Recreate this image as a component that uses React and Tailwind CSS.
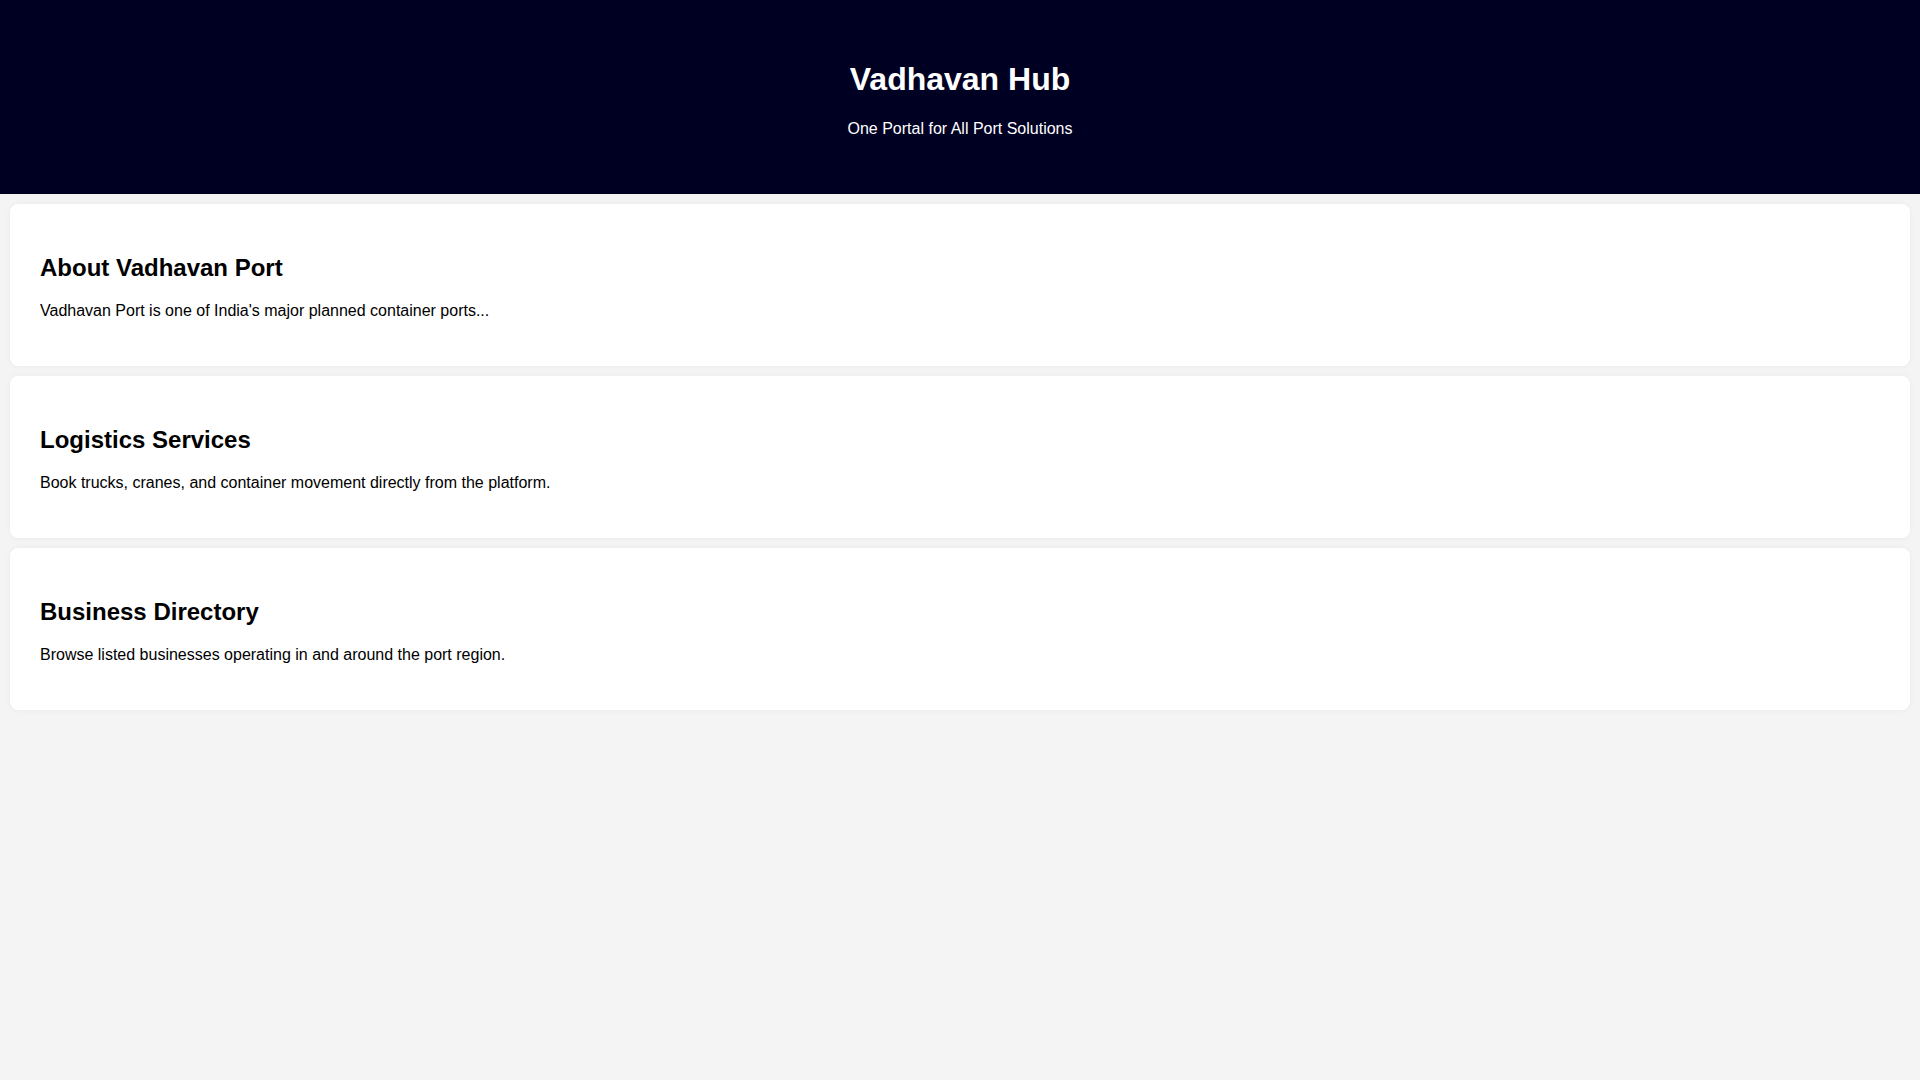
export default function App() {
  const sections = [
    { t: "About Vadhavan Port", d: "Vadhavan Port is one of India's major planned container ports..." },
    { t: "Logistics Services", d: "Book trucks, cranes, and container movement directly from the platform." },
    { t: "Business Directory", d: "Browse listed businesses operating in and around the port region." },
  ];
  return (
    <div className="min-h-screen bg-[#f4f4f4] text-black" style={{ fontFamily: '"Liberation Sans", Arial, sans-serif' }}>
      <header className="bg-[#000022] text-white text-center py-10">
        <h1 className="text-[32px] font-bold leading-[36.8px] mb-[21.44px] mt-[21.44px]">Vadhavan Hub</h1>
        <p className="text-base leading-[18.4px] mb-4">One Portal for All Port Solutions</p>
      </header>
      <main className="flex flex-col gap-[10px] p-[10px]">
        {sections.map((s) => (
          <section key={s.t} className="bg-white rounded-lg p-[30px] shadow-[0_0_5px_rgba(0,0,0,0.05)]">
            <h2 className="text-2xl font-bold leading-[27.6px] mt-5 mb-5">{s.t}</h2>
            <p className="text-base leading-[18.4px] mb-4">{s.d}</p>
          </section>
        ))}
      </main>
    </div>
  );
}
